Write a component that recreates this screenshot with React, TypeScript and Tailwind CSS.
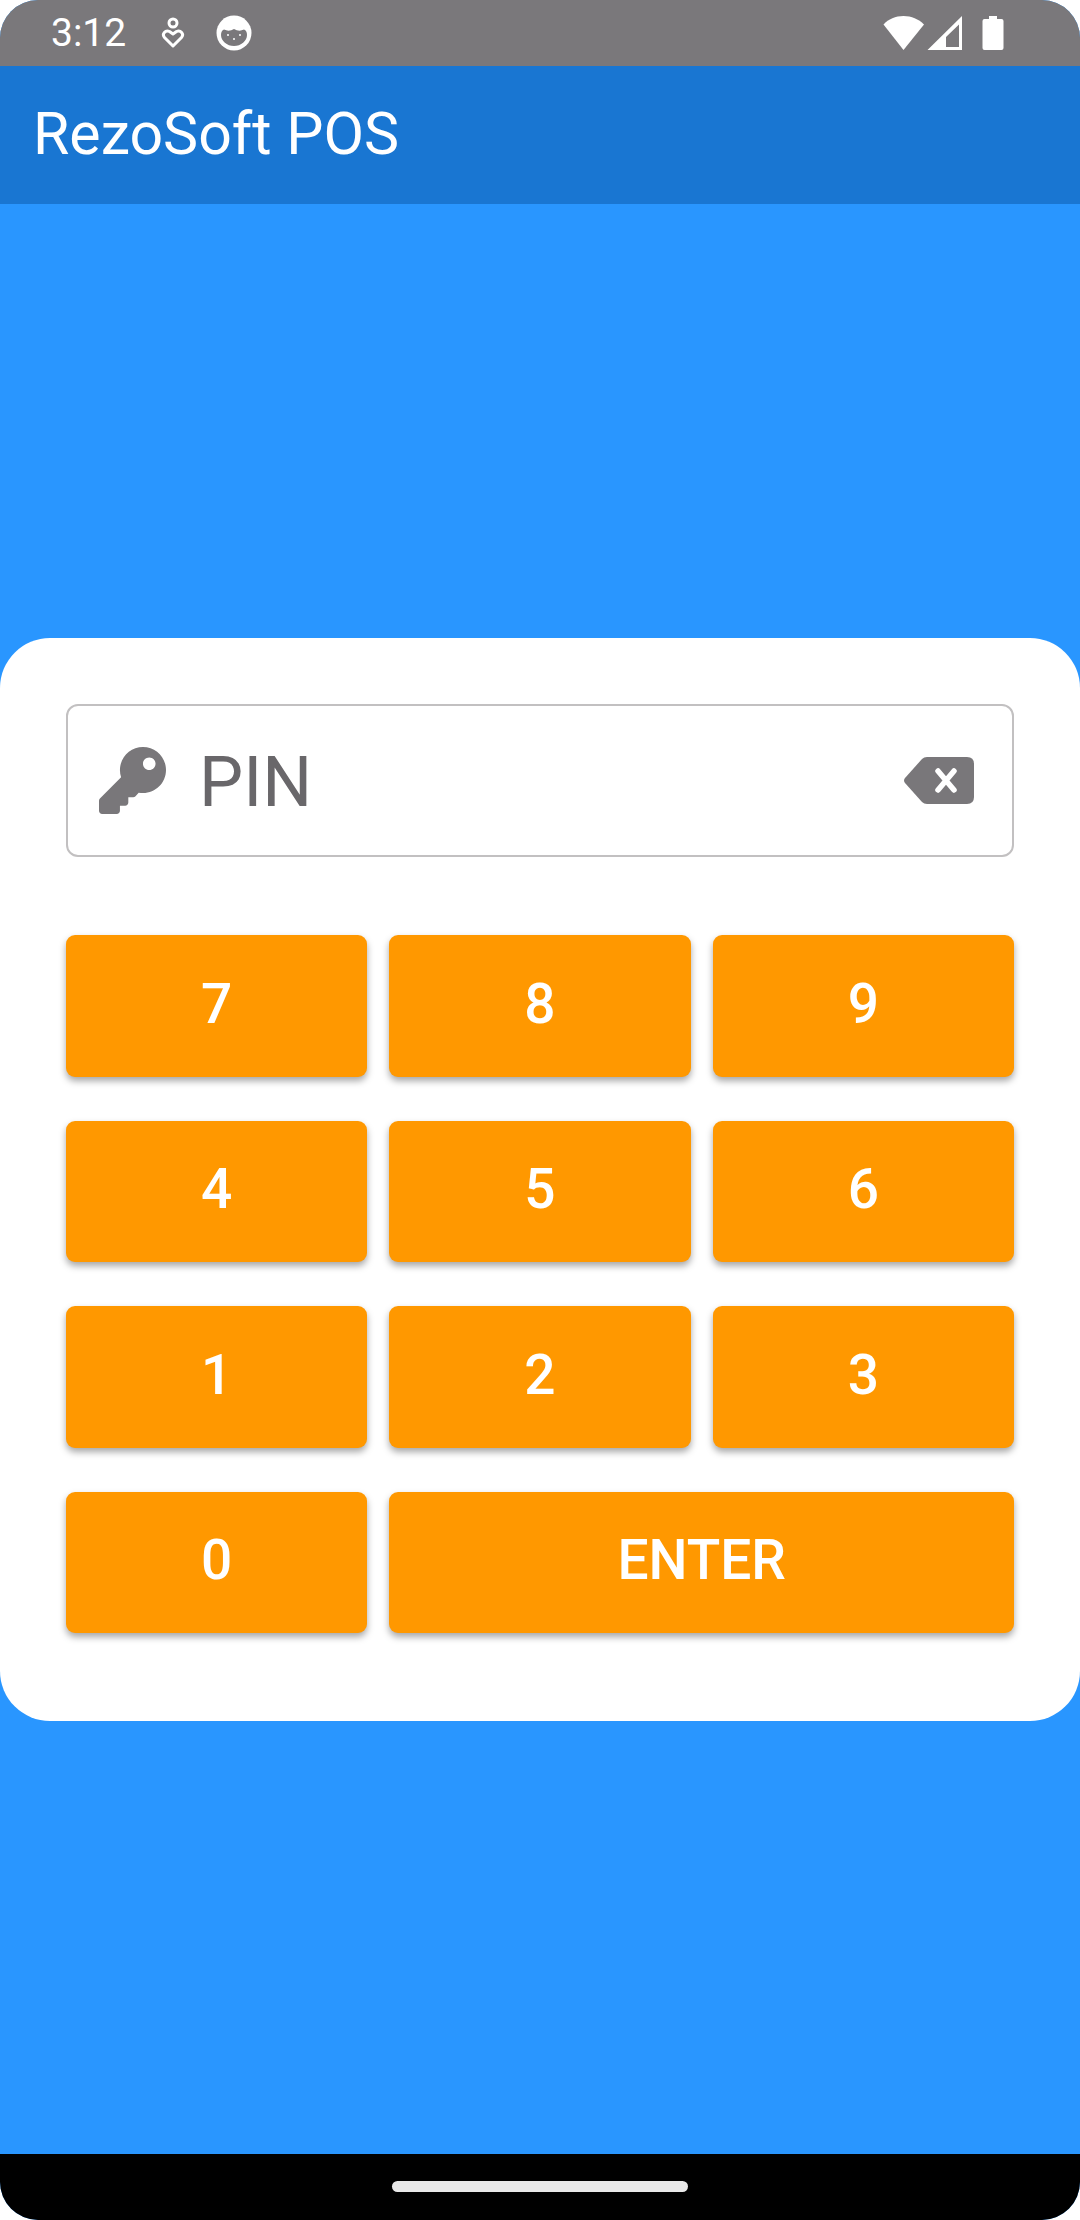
import React from 'react';
import { FaKey } from 'react-icons/fa';

const keys = ['7', '8', '9', '4', '5', '6', '1', '2', '3', '0'];

const StatusIcons = () => (
  <div className="flex items-center">
    {/* wifi */}
    <svg width="42" height="36" viewBox="0 0 42 36">
      <path d="M0.5 9.5C5.5 4 12.5 1 20.5 1S35.5 4 41 9.5L20.5 35z" fill="#fff" />
    </svg>
    {/* signal */}
    <svg width="36" height="36" viewBox="0 0 36 36" className="ml-[2px]">
      <path fillRule="evenodd" d="M35 1V35H0.5zM32 9.500L19 22V32H32z" fill="#fff" />
    </svg>
    {/* battery */}
    <svg width="22" height="36" viewBox="0 0 22 36" className="ml-[19px]">
      <path d="M7 1H15V4H19.500Q21.500 4 21.500 6V33Q21.500 35 19.500 35H2.500Q0.500 35 0.500 33V6Q0.500 4 2.500 4H7z" fill="#fff" />
    </svg>
  </div>
);

export default function App() {
  return (
    <div className="h-[2220px] w-[1080px] bg-white font-['Roboto',sans-serif]">
      <div className="flex h-full flex-col overflow-hidden rounded-[38px] bg-[#2996ff]">
        {/* status bar */}
        <div className="flex h-[66px] items-center justify-between bg-[#7a787b] pl-[51px] pr-[76px] text-white">
          <div className="flex items-center">
            <span className="text-[39px] leading-none">3:12</span>
            <svg width="24" height="32" viewBox="0 0 24 32" className="ml-[35px]" fill="none" stroke="#fff" strokeWidth="3">
              <circle cx="12" cy="6" r="4" />
              <path d="M12 29L3.500 20.500C0.500 17 4.500 12.500 8.500 14.500L12 17L15.500 14.500C19.500 12.500 23.500 17 20.500 20.500z" strokeLinejoin="round" />
            </svg>
            <svg width="36" height="36" viewBox="0 0 36 36" className="ml-[31px]">
              <circle cx="18" cy="18" r="17.500" fill="#fff" />
              <path d="M5 20C5 17 6 15.500 8 14.500Q13 17 18 14Q23 17 28 14.500C30 15.500 31 17 31 20C31 26 25 31 18 31S5 26 5 20z" fill="#7a787b" />
              <circle cx="12" cy="20" r="1" fill="#fff" />
              <circle cx="18" cy="24" r="1" fill="#fff" />
              <circle cx="24" cy="20" r="1" fill="#fff" />
            </svg>
          </div>
          <StatusIcons />
        </div>

        {/* app bar */}
        <div className="flex h-[138px] items-center bg-[#1976d2] pb-[4px] pl-[33px]">
          <span className="text-[59px] leading-none text-white">RezoSoft POS</span>
        </div>

        {/* body */}
        <div className="flex flex-1 flex-col pt-[434px]">
          <div className="rounded-[50px] bg-white px-[66px] pb-[88px] pt-[66px]">
            <div className="flex h-[153px] items-center rounded-[12px] border-2 border-[#c2c0c1] pl-[31px] pr-[38px]">
              <FaKey className="h-[67px] w-[67px] text-[#79777a]" />
              <span className="ml-[33px] flex-1 pt-[3px] text-[70px] leading-none text-[#69676a]">PIN</span>
              <svg width="70" height="47" viewBox="0 0 70 47">
                <path d="M1 21L18 2Q20 0 23 0H63Q70 0 70 7V40Q70 47 63 47H23Q20 47 18 45L1 26Q-1 23.500 1 21z" fill="#79777a" />
                <path d="M34 14L50 33M50 14L34 33" stroke="#fff" strokeWidth="5.500" strokeLinecap="round" />
              </svg>
            </div>

            <div className="mt-[78px] grid grid-cols-3 gap-x-[22px] gap-y-[44px]">
              {keys.map((k) => (
                <button key={k} className="flex h-[141.5px] items-center justify-center rounded-[9px] bg-[#ff9800] pb-[3px] text-[55px] font-medium leading-none text-white shadow-[0_4px_7px_rgba(0,0,0,0.35)]">
                  {k}
                </button>
              ))}
              <button className="col-span-2 flex h-[141.5px] items-center justify-center rounded-[9px] bg-[#ff9800] pb-[3px] text-[55px] font-medium leading-none text-white shadow-[0_4px_7px_rgba(0,0,0,0.35)]">
                ENTER
              </button>
            </div>
          </div>
        </div>

        {/* nav bar */}
        <div className="flex h-[66px] justify-center bg-black pt-[27px]">
          <div className="h-[11px] w-[296px] rounded-full bg-[#e9e9e9]" />
        </div>
      </div>
    </div>
  );
}
